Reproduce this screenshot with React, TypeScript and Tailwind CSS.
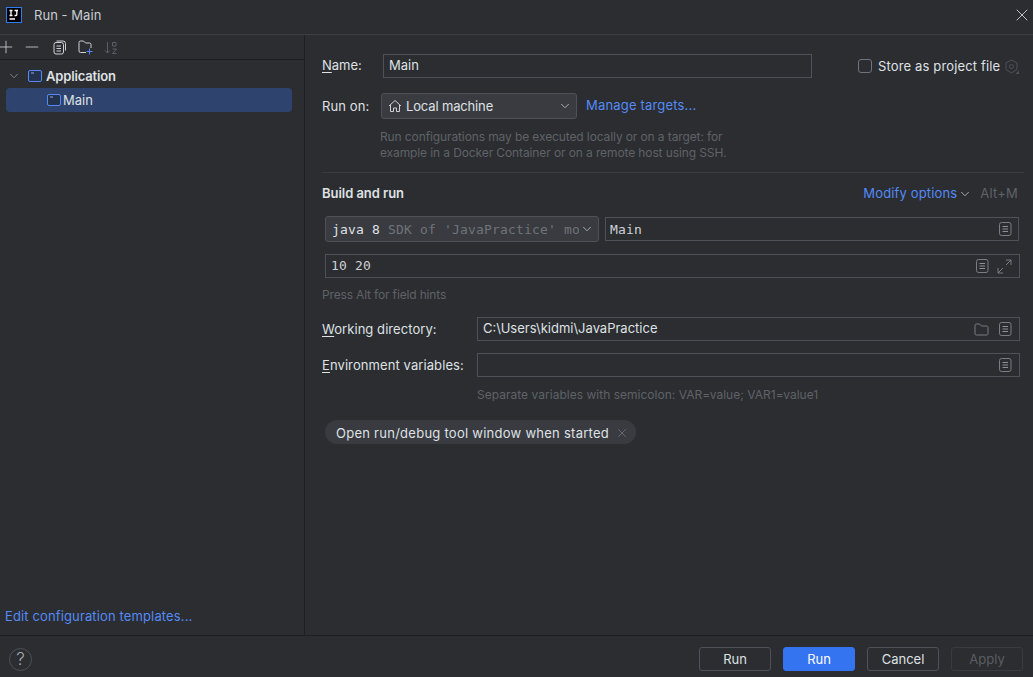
import React from 'react';
import { ChevronDown, X, Plus, Minus } from 'lucide-react';

const FONT = 'font-["Inter","Liberation_Sans",sans-serif]';
const MONO = 'font-["DejaVu_Sans_Mono",monospace]';

const WindowIcon: React.FC<{ size?: number }> = ({ size = 14 }) => (
  <svg width={size} height={size - 2} viewBox="0 0 14 12" fill="none" className="shrink-0">
    <rect x="0.5" y="0.5" width="13" height="11" rx="1.5" fill="#25324d" stroke="#548af7" />
    <path d="M3 3h3" stroke="#8aa9e8" strokeWidth="1" />
  </svg>
);

const DocIcon = () => (
  <svg width="13" height="14" viewBox="0 0 13 14" fill="none" className="shrink-0">
    <rect x="0.5" y="0.5" width="11.500" height="13" rx="2" stroke="#7a7d83" />
    <path d="M3.500 4.500h5.500M3.500 7h5.500M3.500 9.500h5.500" stroke="#8d9096" />
  </svg>
);

const FolderIcon = () => (
  <svg width="15" height="13" viewBox="0 0 15 13" fill="none" className="shrink-0">
    <path d="M1 2.500A1.500 1.500 0 0 1 2.500 1h3l2 2h5A1.500 1.500 0 0 1 14 4.500V10.500A1.500 1.500 0 0 1 12.500 12h-10A1.500 1.500 0 0 1 1 10.500Z" stroke="#7a7d83" />
  </svg>
);

const Field: React.FC<{ className?: string; children?: React.ReactNode }> = ({ className = '', children }) => (
  <div className={`h-6 border border-[#4e5157] flex items-center ${className}`}>{children}</div>
);

const Btn: React.FC<{ label: string; primary?: boolean; disabled?: boolean }> = ({ label, primary, disabled }) => (
  <div
    className={`w-[72px] h-6 pt-[2px] rounded-[3px] flex items-center justify-center text-[13px] border ${
      primary
        ? 'bg-[#3574f0] border-[#3574f0] text-white'
        : disabled
        ? 'border-[#393b40] text-[#5a5d63]'
        : 'border-[#4e5157] text-[#dfe1e5]'
    }`}
  >
    {label}
  </div>
);

export default function App() {
  return (
    <div className={`${FONT} w-[1033px] h-[677px] bg-[#2b2d30] text-[#dfe1e5] text-[13px] flex flex-col overflow-hidden`}>
      {/* title bar */}
      <div className="h-[35px] shrink-0 border-b border-[#3c3e43] flex items-center pl-[6px] pr-[1px]">
        <svg width="16" height="16" viewBox="0 0 16 16" className="shrink-0 mb-[5px]">
          <rect x="0.5" y="0.5" width="15" height="15" fill="#000" stroke="#2f7df0" />
          <path d="M3.500 3.500h3M5 3.500v5M3.500 8.500h3M8.500 3.500h3.500M10.800 3.500v4.200q0 .8-.8.800H8.500M3.500 12h5.500" stroke="#fff" strokeWidth="1.300" fill="none" />
        </svg>
        <span className="ml-3 mb-[2px] text-[#c9ccd2] tracking-[0.05px]">Run - Main</span>
        <X size={20} strokeWidth={1} className="ml-auto mb-[4px] text-[#dfe1e5]" />
      </div>

      <div className="flex-1 flex min-h-0">
        {/* left panel */}
        <div className="w-[305px] shrink-0 border-r border-[#1e1f22] flex flex-col">
          <div className="h-[25px] shrink-0 border-b border-[#1e1f22] flex items-center">
            <Plus size={20} strokeWidth={1} className="-ml-[4px] text-[#ced0d6]" />
            <Minus size={20} strokeWidth={1} className="ml-[6px] text-[#ced0d6]" />
            <svg width="14" height="15" viewBox="0 0 14 15" fill="none" className="ml-[11px]">
              <rect x="1" y="2.500" width="9.500" height="11.500" rx="2" stroke="#ced0d6" />
              <path d="M3.500 1h6.500a2.500 2.500 0 0 1 2.500 2.500v7" stroke="#ced0d6" />
              <path d="M3.500 6h4.500M3.500 8.500h4.500M3.500 11h4.500" stroke="#ced0d6" />
            </svg>
            <svg width="16" height="15" viewBox="0 0 16 15" fill="none" className="ml-[11px]">
              <path d="M8 12.500H2.500A1.500 1.500 0 0 1 1 11V2.500A1.500 1.500 0 0 1 2.500 1h3l2 2h4A1.500 1.500 0 0 1 13 4.500V8" stroke="#ced0d6" />
              <path d="M11.500 8.500v6M8.500 11.500h6" stroke="#548af7" />
            </svg>
            <svg width="14" height="15" viewBox="0 0 14 15" fill="none" className="ml-[10px]">
              <path d="M3.500 2v11M1 10.500 3.500 13 6 10.500" stroke="#5c5f65" />
              <path d="M8.500 2.500h3.500v3.500h-3.500zM8.500 9h4l-4 4.500h4" stroke="#5c5f65" />
            </svg>
          </div>

          <div className="pt-[4px] px-[6px] flex-1 flex flex-col">
            <div className="h-6 flex items-center">
              <ChevronDown size={14} strokeWidth={1.3} className="ml-[1px] text-[#9a9da3]" />
              <span className="ml-[7px]"><WindowIcon /></span>
              <span className="ml-[4px] pt-[2px] font-semibold text-[#dfe1e5] tracking-[-0.15px]">Application</span>
            </div>
            <div className="h-6 rounded-[4px] bg-[#2e436e] flex items-center pl-[41px] w-[286px]">
              <WindowIcon />
              <span className="ml-[2px] pt-[2px] text-[#dfe1e5]">Main</span>
            </div>
            <div className="mt-auto mb-[9px] -ml-[1px] text-[#548af7] tracking-[0.13px]">Edit configuration templates...</div>
          </div>
        </div>

        {/* right panel */}
        <div className="flex-1 min-w-0 pl-[17px] pr-[9px] pt-[19px] flex flex-col">
          <div className="flex items-center h-6">
            <span className="w-[61px] shrink-0"><u className="underline underline-offset-2">N</u>ame:</span>
            <Field className="w-[429px] pl-[5px]">Main</Field>
            <span className="ml-[46px] w-[14px] h-[14px] rounded-[3px] border border-[#6f737a] shrink-0" />
            <span className="ml-[6px] pt-[2px] tracking-[0.15px]">Store as project file</span>
            <svg width="15" height="15" viewBox="0 0 15 15" fill="none" className="ml-[4px] mt-[1px]">
              <path d="M7.500 1 13 4v6.500L7.500 14 2 10.500V4Z" stroke="#4e5157" />
              <circle cx="7.500" cy="7.500" r="2" stroke="#4e5157" />
              <path d="M15 11.500V15h-3.500Z" fill="#4e5157" />
            </svg>
          </div>

          <div className="flex items-center h-[26px] mt-[15px]">
            <span className="w-[59px] shrink-0 pt-[2px] tracking-[0.1px]">Run on:</span>
            <div className="w-[196px] h-[26px] rounded-[3px] border border-[#4e5157] bg-[#393b40] flex items-center pl-[6px] pr-[4px]">
              <svg width="14" height="14" viewBox="0 0 14 14" fill="none">
                <path d="M1 7 7 1.500 13 7M2.500 6v6.500h3V9h3v3.500h3V6" stroke="#ced0d6" />
              </svg>
              <span className="ml-[4px] pt-[2px] tracking-[-0.15px]">Local machine</span>
              <ChevronDown size={14} strokeWidth={1.3} className="ml-auto text-[#ced0d6]" />
            </div>
            <span className="ml-[9px] text-[#548af7] tracking-[0.18px]">Manage targets...</span>
          </div>

          <div className="ml-[58px] mt-[10px] text-[12px] leading-[16px] text-[#5f6268] tracking-[-0.11px]">
            Run configurations may be executed locally or on a target: for<br />
            example in a Docker Container or on a remote host using SSH.
          </div>

          <div className="h-px bg-[#393b40] mt-[11px] w-[702px]" />

          <div className="flex items-center h-[18px] mt-[12px]">
            <span className="font-semibold tracking-[-0.05px]">Build and run</span>
            <span className="ml-auto text-[#548af7] tracking-[0.15px]">Modify options</span>
            <ChevronDown size={14} strokeWidth={1.3} className="ml-[1px] text-[#ced0d6]" />
            <span className="ml-[8px] mr-[6px] text-[#5f6268] tracking-[0.2px]">Alt+M</span>
          </div>

          <div className="flex items-center mt-[13px] ml-[3px] h-[26px]">
            <div className="w-[274px] h-[26px] rounded-[3px] border border-[#4e5157] bg-[#393b40] flex items-center pl-[6px] pr-[4px]">
              <div className={`${MONO} flex-1 min-w-0 overflow-hidden whitespace-nowrap pt-[2px] text-[13px] tracking-[0.17px]`}>
                <span className="text-[#dfe1e5]">java 8</span>{' '}
                <span className="text-[#6f737a]">SDK of 'JavaPractice' module</span>
              </div>
              <ChevronDown size={14} strokeWidth={1.3} className="ml-[1px] shrink-0 text-[#ced0d6]" />
            </div>
            <Field className={`${MONO} ml-[6px] w-[414px] pl-[4px] pr-[6px] text-[#ced0d6] tracking-[0.17px]`}>
              <span className="pt-[2px]">Main</span>
              <span className="ml-auto"><DocIcon /></span>
            </Field>
          </div>

          <Field className={`${MONO} mt-[12px] ml-[3px] w-[695px] pl-[5px] pr-[7px] text-[#ced0d6] tracking-[0.17px] shrink-0`}>
            10 20
            <span className="ml-auto"><DocIcon /></span>
            <svg width="15" height="15" viewBox="0 0 15 15" fill="none" className="ml-[8px] shrink-0">
              <path d="M9 1h5v5M14 1 9 6M1 9v5h5M1 14l5-5" stroke="#7a7d83" />
            </svg>
          </Field>

          <div className="mt-[9px] text-[12px] leading-[16px] text-[#5f6268] tracking-[-0.16px]">Press Alt for field hints</div>

          <div className="flex items-center h-6 mt-[14px]">
            <span className="w-[155px] shrink-0 pt-[2px] tracking-[0.06px]"><u className="underline underline-offset-2">W</u>orking directory:</span>
            <Field className="w-[543px] pl-[5px] pr-[7px]">
              C:\Users\kidmi\JavaPractice
              <span className="ml-auto mr-[10px]"><FolderIcon /></span>
              <DocIcon />
            </Field>
          </div>

          <div className="flex items-center h-6 mt-[12px]">
            <span className="w-[155px] shrink-0 pt-[2px] tracking-[0.09px]"><u className="underline underline-offset-2">E</u>nvironment variables:</span>
            <Field className="w-[543px] pr-[7px] justify-end"><DocIcon /></Field>
          </div>

          <div className="ml-[155px] mt-[10px] text-[12px] leading-[16px] text-[#5f6268] tracking-[0.02px]">
            Separate variables with semicolon: VAR=value; VAR1=value1
          </div>

          <div className="mt-[17px] ml-[3px] h-[24px] w-[311px] rounded-full bg-[#393b40] flex items-center pl-[11px]">
            <span className="pt-[3px] tracking-[0.26px]">Open run/debug tool window when started</span>
            <X size={14} strokeWidth={1.2} className="ml-[6px] mt-[1px] text-[#7a7d83]" />
          </div>
        </div>
      </div>

      {/* footer */}
      <div className="h-[42px] shrink-0 border-t border-[#1e1f22] flex items-start pt-[11px] pl-[9px] pr-[10px]">
        <div className="w-[23px] h-[23px] mt-[1px] rounded-full border border-[#4e5157] flex items-center justify-center text-[17px] font-light text-[#a8abb0]">?</div>
        <div className="ml-auto flex gap-3">
          <Btn label="Run" />
          <Btn label="Run" primary />
          <Btn label="Cancel" />
          <Btn label="Apply" disabled />
        </div>
      </div>
    </div>
  );
}
